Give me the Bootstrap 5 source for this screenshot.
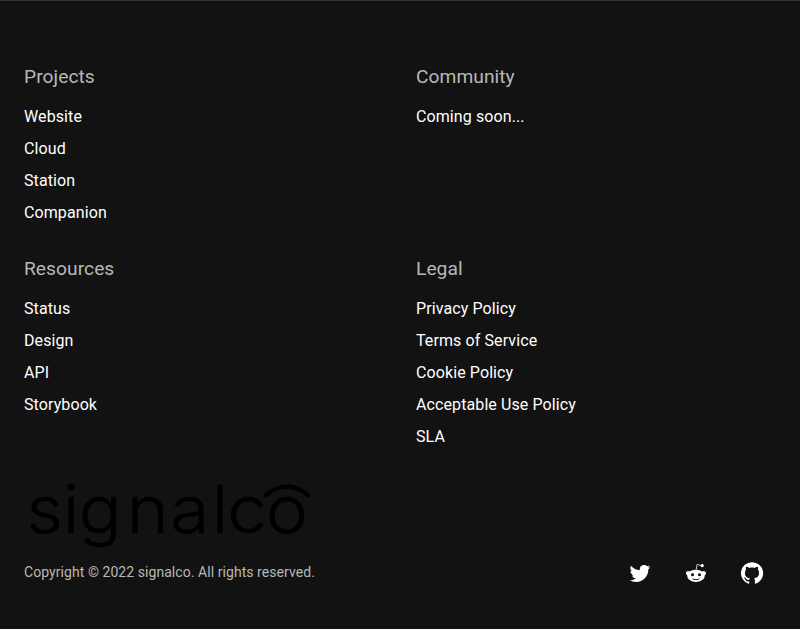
<!DOCTYPE html>
<html lang="en">
<head>
<meta charset="utf-8">
<meta name="viewport" content="width=device-width, initial-scale=1">
<title>signalco</title>
<link href="https://cdn.jsdelivr.net/npm/bootstrap@5.3.0/dist/css/bootstrap.min.css" rel="stylesheet">
<style>
body{background:#121212;color:#fff;font-family:Roboto,"Liberation Sans",sans-serif;line-height:24px;letter-spacing:.1px}
.site-footer{border-top:1px solid #323232;padding:64px 24px 32px}
.link-grid{display:grid;grid-template-columns:1fr 1fr;gap:32px}
.link-grid h2{font-size:19.2px;font-weight:400;line-height:24px;letter-spacing:.05px;color:#b8b8b8;margin:0 0 16px}
.link-grid ul{display:grid;gap:8px}
.copyright{font-size:14px;line-height:20px;letter-spacing:.06px;color:#b8b8b8}
.brand{padding-bottom:11px}
.wordmark{font-family:Inter,sans-serif;font-weight:300;font-size:66px;letter-spacing:0;stroke:#000;stroke-width:.4}
.socials{gap:16px;padding-right:4px}
.socials a{width:40px;height:40px}
</style>
</head>
<body>
<footer class="site-footer">
  <div class="link-grid">
    <section><h2>Projects</h2>
      <ul class="list-unstyled mb-0">
        <li><a class="text-reset text-decoration-none" href="#">Website</a></li>
        <li><a class="text-reset text-decoration-none" href="#">Cloud</a></li>
        <li><a class="text-reset text-decoration-none" href="#">Station</a></li>
        <li><a class="text-reset text-decoration-none" href="#">Companion</a></li>
      </ul></section>
    <section><h2>Community</h2>
      <ul class="list-unstyled mb-0">
        <li><a class="text-reset text-decoration-none" href="#">Coming soon...</a></li>
      </ul></section>
    <section><h2>Resources</h2>
      <ul class="list-unstyled mb-0">
        <li><a class="text-reset text-decoration-none" href="#">Status</a></li>
        <li><a class="text-reset text-decoration-none" href="#">Design</a></li>
        <li><a class="text-reset text-decoration-none" href="#">API</a></li>
        <li><a class="text-reset text-decoration-none" href="#">Storybook</a></li>
      </ul></section>
    <section><h2>Legal</h2>
      <ul class="list-unstyled mb-0">
        <li><a class="text-reset text-decoration-none" href="#">Privacy Policy</a></li>
        <li><a class="text-reset text-decoration-none" href="#">Terms of Service</a></li>
        <li><a class="text-reset text-decoration-none" href="#">Cookie Policy</a></li>
        <li><a class="text-reset text-decoration-none" href="#">Acceptable Use Policy</a></li>
        <li><a class="text-reset text-decoration-none" href="#">SLA</a></li>
      </ul></section>
  </div>
  <div class="d-flex justify-content-between align-items-end mt-3">
    <div class="brand">
      <svg class="d-block overflow-visible" width="300" height="97" viewBox="24 465 300 97" role="img" aria-label="signalco">
        <text class="wordmark" transform="scale(1.08 1)" y="532.7" x="24.3 58 72.9 117.3 157.7 195.9 210.35 246">signalco</text>
        <path d="M266 495Q287 478 308 495" fill="none" stroke="#000" stroke-width="4.4" stroke-linecap="round"/>
      </svg>
      <div class="copyright">Copyright © 2022 signalco. All rights reserved.</div>
    </div>
    <div class="socials d-flex">
      <a class="text-reset d-flex align-items-center justify-content-center" href="#" aria-label="Twitter"><svg width="24" height="24" viewBox="0 0 24 24" fill="currentColor"><path d="M22.46 6c-.77.35-1.6.58-2.46.69.88-.53 1.56-1.37 1.88-2.38-.83.5-1.75.85-2.72 1.05C18.37 4.5 17.26 4 16 4c-2.35 0-4.27 1.92-4.27 4.29 0 .34.04.67.11.98C8.28 9.09 5.11 7.38 3 4.79c-.37.63-.58 1.37-.58 2.15 0 1.49.75 2.81 1.91 3.56-.71 0-1.37-.2-1.95-.5v.03c0 2.08 1.48 3.82 3.44 4.21a4.22 4.22 0 0 1-1.93.07 4.28 4.28 0 0 0 4 2.98 8.521 8.521 0 0 1-5.33 1.84c-.34 0-.68-.02-1.02-.06C3.44 20.29 5.7 21 8.12 21 16 21 20.33 14.46 20.33 8.79c0-.19 0-.37-.01-.56.84-.6 1.56-1.36 2.14-2.23z"/></svg></a>
      <a class="text-reset d-flex align-items-center justify-content-center" href="#" aria-label="Reddit"><svg width="24" height="24" viewBox="0 0 24 24" fill="currentColor"><path d="M22 12.14a2.19 2.19 0 0 0-3.71-1.57 10.93 10.93 0 0 0-5.86-1.87l1-4.7 3.27.71a1.56 1.56 0 1 0 .16-.76l-3.64-.77c-.11-.02-.22 0-.29.06-.09.05-.14.14-.16.26l-1.11 5.22c-2.33.07-4.43.78-5.95 1.86A2.2 2.2 0 0 0 4.19 10a2.16 2.16 0 0 0-.9 4.15 3.6 3.6 0 0 0-.05.66c0 3.37 3.92 6.12 8.76 6.12s8.76-2.73 8.76-6.12c0-.21-.01-.44-.05-.66A2.21 2.21 0 0 0 22 12.14M7 13.7c0-.86.68-1.56 1.54-1.56s1.56.7 1.56 1.56a1.56 1.56 0 0 1-1.56 1.56c-.86.02-1.54-.7-1.54-1.56m8.71 4.14C14.63 18.92 12.59 19 12 19c-.61 0-2.65-.1-3.71-1.16a.4.4 0 0 1 0-.57.4.4 0 0 1 .57 0c.68.68 2.14.91 3.14.91s2.47-.23 3.14-.91a.4.4 0 0 1 .57 0c.14.16.14.41 0 .57m-.29-2.56c-.86 0-1.56-.7-1.56-1.56a1.56 1.56 0 0 1 1.56-1.56c.86 0 1.58.7 1.58 1.56a1.6 1.6 0 0 1-1.58 1.56z"/></svg></a>
      <a class="text-reset d-flex align-items-center justify-content-center" href="#" aria-label="GitHub"><svg width="24" height="24" viewBox="0 0 24 24" fill="currentColor"><path d="M12 1.27a11 11 0 0 0-3.48 21.46c.55.09.73-.28.73-.55v-1.84c-3.03.64-3.67-1.46-3.67-1.46-.55-1.29-1.28-1.65-1.28-1.65-.92-.65.1-.65.1-.65 1.1 0 1.73 1.1 1.73 1.1.92 1.65 2.57 1.2 3.21.92a2 2 0 0 1 .64-1.47c-2.47-.27-5.04-1.19-5.04-5.5 0-1.1.46-2.1 1.2-2.84a3.76 3.76 0 0 1 0-2.93s.91-.28 3.11 1.1c1.8-.49 3.7-.49 5.5 0 2.1-1.38 3.02-1.1 3.02-1.1a3.76 3.76 0 0 1 .1 2.93c.83.74 1.2 1.74 1.2 2.94 0 4.21-2.57 5.13-5.04 5.4.45.37.82.92.82 2.02v3.03c0 .27.1.64.73.55A11 11 0 0 0 12 1.27"/></svg></a>
    </div>
  </div>
</footer>
<script src="https://cdn.jsdelivr.net/npm/bootstrap@5.3.0/dist/js/bootstrap.bundle.min.js"></script>
</body>
</html>
